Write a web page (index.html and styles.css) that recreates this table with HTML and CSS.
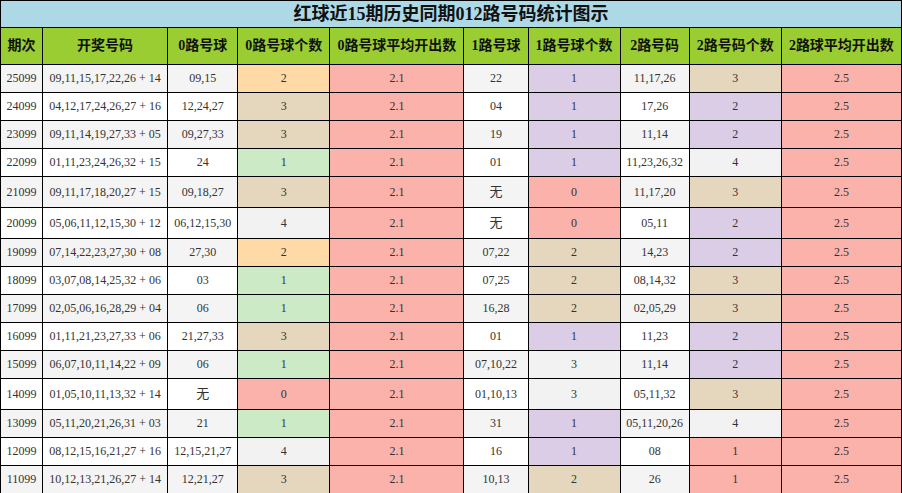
FILE: index.html
```html
<!DOCTYPE html>
<html lang="zh">
<head>
<meta charset="utf-8">
<title>红球近15期历史同期012路号码统计图示</title>
<link rel="stylesheet" href="styles.css">
</head>
<body>
<table class="stats">
  <colgroup>
    <col class="w-issue"><col class="w-draw"><col class="w-r0"><col class="w-r0n"><col class="w-r0a">
    <col class="w-r1"><col class="w-r1n"><col class="w-r2"><col class="w-r2n"><col class="w-r2a">
  </colgroup>
  <thead>
    <tr><th class="title" colspan="10">红球近15期历史同期012路号码统计图示</th></tr>
    <tr class="head">
      <th>期次</th><th>开奖号码</th><th>0路号球</th><th>0路号球个数</th><th>0路号球平均开出数</th>
      <th>1路号球</th><th>1路号球个数</th><th>2路号码</th><th>2路号码个数</th><th>2路球平均开出数</th>
    </tr>
  </thead>
  <tbody>
    <tr><td>25099</td><td>09,11,15,17,22,26 + 14</td><td>09,15</td><td class="c-peach">2</td><td class="c-red">2.1</td><td>22</td><td class="c-lav">1</td><td>11,17,26</td><td class="c-tan">3</td><td class="c-red">2.5</td></tr>
    <tr><td>24099</td><td>04,12,17,24,26,27 + 16</td><td>12,24,27</td><td class="c-tan">3</td><td class="c-red">2.1</td><td>04</td><td class="c-lav">1</td><td>17,26</td><td class="c-lav">2</td><td class="c-red">2.5</td></tr>
    <tr><td>23099</td><td>09,11,14,19,27,33 + 05</td><td>09,27,33</td><td class="c-tan">3</td><td class="c-red">2.1</td><td>19</td><td class="c-lav">1</td><td>11,14</td><td class="c-lav">2</td><td class="c-red">2.5</td></tr>
    <tr><td>22099</td><td>01,11,23,24,26,32 + 15</td><td>24</td><td class="c-green">1</td><td class="c-red">2.1</td><td>01</td><td class="c-lav">1</td><td>11,23,26,32</td><td class="c-gray">4</td><td class="c-red">2.5</td></tr>
    <tr><td>21099</td><td>09,11,17,18,20,27 + 15</td><td>09,18,27</td><td class="c-tan">3</td><td class="c-red">2.1</td><td class="none">无</td><td class="c-red">0</td><td>11,17,20</td><td class="c-tan">3</td><td class="c-red">2.5</td></tr>
    <tr><td>20099</td><td>05,06,11,12,15,30 + 12</td><td>06,12,15,30</td><td class="c-gray">4</td><td class="c-red">2.1</td><td class="none">无</td><td class="c-red">0</td><td>05,11</td><td class="c-lav">2</td><td class="c-red">2.5</td></tr>
    <tr><td>19099</td><td>07,14,22,23,27,30 + 08</td><td>27,30</td><td class="c-peach">2</td><td class="c-red">2.1</td><td>07,22</td><td class="c-tan">2</td><td>14,23</td><td class="c-lav">2</td><td class="c-red">2.5</td></tr>
    <tr><td>18099</td><td>03,07,08,14,25,32 + 06</td><td>03</td><td class="c-green">1</td><td class="c-red">2.1</td><td>07,25</td><td class="c-tan">2</td><td>08,14,32</td><td class="c-tan">3</td><td class="c-red">2.5</td></tr>
    <tr><td>17099</td><td>02,05,06,16,28,29 + 04</td><td>06</td><td class="c-green">1</td><td class="c-red">2.1</td><td>16,28</td><td class="c-tan">2</td><td>02,05,29</td><td class="c-tan">3</td><td class="c-red">2.5</td></tr>
    <tr><td>16099</td><td>01,11,21,23,27,33 + 06</td><td>21,27,33</td><td class="c-tan">3</td><td class="c-red">2.1</td><td>01</td><td class="c-lav">1</td><td>11,23</td><td class="c-lav">2</td><td class="c-red">2.5</td></tr>
    <tr><td>15099</td><td>06,07,10,11,14,22 + 09</td><td>06</td><td class="c-green">1</td><td class="c-red">2.1</td><td>07,10,22</td><td class="c-gray">3</td><td>11,14</td><td class="c-lav">2</td><td class="c-red">2.5</td></tr>
    <tr><td>14099</td><td>01,05,10,11,13,32 + 14</td><td class="none">无</td><td class="c-red">0</td><td class="c-red">2.1</td><td>01,10,13</td><td class="c-gray">3</td><td>05,11,32</td><td class="c-tan">3</td><td class="c-red">2.5</td></tr>
    <tr><td>13099</td><td>05,11,20,21,26,31 + 03</td><td>21</td><td class="c-green">1</td><td class="c-red">2.1</td><td>31</td><td class="c-lav">1</td><td>05,11,20,26</td><td class="c-gray">4</td><td class="c-red">2.5</td></tr>
    <tr><td>12099</td><td>08,12,15,16,21,27 + 16</td><td>12,15,21,27</td><td class="c-gray">4</td><td class="c-red">2.1</td><td>16</td><td class="c-lav">1</td><td>08</td><td class="c-red">1</td><td class="c-red">2.5</td></tr>
    <tr><td>11099</td><td>10,12,13,21,26,27 + 14</td><td>12,21,27</td><td class="c-tan">3</td><td class="c-red">2.1</td><td>10,13</td><td class="c-tan">2</td><td>26</td><td class="c-red">1</td><td class="c-red">2.5</td></tr>
  </tbody>
</table>
</body>
</html>
```

FILE: styles.css
```css
html, body {
  margin: 0;
  padding: 0;
  background: #ffffff;
}

.stats {
  width: 902px;
  table-layout: fixed;
  border-collapse: collapse;
  font-family: "Liberation Serif", "Noto Sans CJK SC", serif;
  color: #333333;
}

.w-issue { width: 42px; }
.w-draw { width: 125px; }
.w-r0 { width: 70px; }
.w-r0n { width: 92px; }
.w-r0a { width: 134px; }
.w-r1 { width: 64px; }
.w-r1n { width: 92px; }
.w-r2 { width: 69px; }
.w-r2n { width: 92px; }
.w-r2a { width: 120px; }

.stats th,
.stats td {
  border: 1px solid #000000;
  text-align: center;
  white-space: nowrap;
  overflow: hidden;
}

.title {
  background: #add8e6;
  color: #111111;
  font-size: 18px;
  font-weight: bold;
  height: 26px;
  padding: 0;
  line-height: 26px;
  border-bottom-width: 2px;
}

.head th {
  background: #9acd32;
  color: #111111;
  font-size: 14px;
  font-weight: bold;
  height: 36px;
  padding: 0 2px;
  line-height: 36px;
}

.stats td {
  font-size: 12px;
  line-height: 15px;
  padding: 6px 2px;
  background: #ffffff;
}

.stats td.none {
  font-size: 13px;
  line-height: 18px;
}

.stats tbody tr:nth-child(odd) td {
  background: #f4f4f4;
}

.stats tbody tr td.c-peach { background: #ffd9a6; }
.stats tbody tr td.c-tan { background: #e5d7bd; }
.stats tbody tr td.c-green { background: #cdeac6; }
.stats tbody tr td.c-red { background: #fab2aa; }
.stats tbody tr td.c-lav { background: #dccde6; }
.stats tbody tr td.c-gray { background: #f2f2f2; }
```
